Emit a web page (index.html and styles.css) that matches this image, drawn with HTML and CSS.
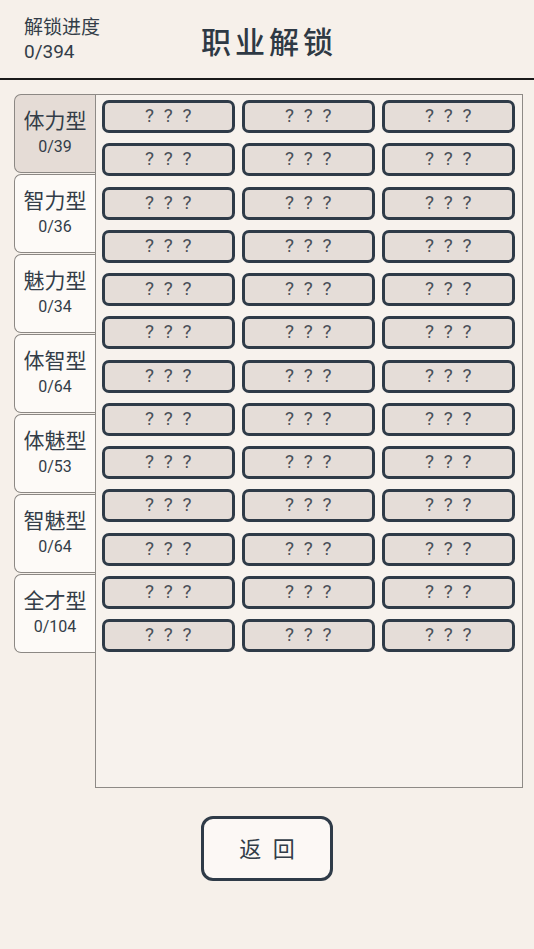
FILE: index.html
```html
<!DOCTYPE html>
<html lang="zh">
<head>
	<meta charset="UTF-8">
	<title>职业解锁</title>
	<link rel="stylesheet" href="styles.css">
</head>
<body>
	<div class="page">
		<div class="header">
			<div class="progress">
				<div>解锁进度</div>
				<div>0/394</div>
			</div>
			<div class="title">职业解锁</div>
		</div>
		<div class="main">
			<ul class="tabs">
				<li class="tab active"><span class="name">体力型</span><span class="num">0/39</span></li>
				<li class="tab"><span class="name">智力型</span><span class="num">0/36</span></li>
				<li class="tab"><span class="name">魅力型</span><span class="num">0/34</span></li>
				<li class="tab"><span class="name">体智型</span><span class="num">0/64</span></li>
				<li class="tab"><span class="name">体魅型</span><span class="num">0/53</span></li>
				<li class="tab"><span class="name">智魅型</span><span class="num">0/64</span></li>
				<li class="tab"><span class="name">全才型</span><span class="num">0/104</span></li>
			</ul>
			<div class="panel">
				<div class="grid" id="grid"></div>
			</div>
		</div>
		<div class="footer">
			<div class="back">返 回</div>
		</div>
	</div>
	<script>
		// 体力型 共39个职业，未解锁显示 ? ? ?
		var grid=document.getElementById('grid');
		for(var i=0;i<39;i++){
			var card=document.createElement('div');
			card.className='card';
			card.innerHTML='? ? ?';
			grid.appendChild(card);
		}
	</script>
</body>
</html>
```
FILE: styles.css
```css
body{
	margin:0;
	background:#f6f0ea;
	font-family:"Roboto","Noto Sans CJK SC",sans-serif;
	color:#333d48;
}
ul{
	margin:0;
	padding:0;
	list-style:none;
}
.page{
	width:534px;
	height:949px;
}
.header{
	height:78px;
	border-bottom:2px solid #1a1a1a;
	position:relative;
	display:flex;
	justify-content:center;
	align-items:center;
}
.progress{
	position:absolute;
	left:24px;
	top:16px;
	font-size:19px;
	line-height:24px;
}
.title{
	font-size:30px;
	font-weight:500;
	letter-spacing:4px;
	padding-left:4px;
	color:#2e3944;
	margin-top:2px;
}
.main{
	display:flex;
	padding:14px 11px 0 14px;
}
.tabs{
	width:81px;
	flex-shrink:0;
}
.tab{
	height:79px;
	margin-bottom:1px;
	box-sizing:border-box;
	border:1px solid #8c8884;
	border-right:none;
	border-radius:7px 0 0 7px;
	background:#fdfaf7;
	display:flex;
	flex-direction:column;
	align-items:center;
	justify-content:center;
}
.tab.active{
	background:#e5dcd6;
}
.tab .name{
	font-size:21px;
	line-height:27px;
}
.tab .num{
	font-size:16px;
	line-height:24px;
}
.panel{
	flex:1;
	height:694px;
	box-sizing:border-box;
	border:1px solid #8e8a86;
	background:#f7f2ed;
	padding:5px 7px 0 6px;
}
.grid{
	display:grid;
	grid-template-columns:repeat(3,133px);
	column-gap:7px;
	row-gap:10.25px;
}
.card{
	height:33px;
	box-sizing:border-box;
	border:3px solid #2f3b48;
	border-radius:7px;
	background:#e5ddd8;
	text-align:center;
	font-size:19px;
	line-height:25px;
	color:#4a5058;
	letter-spacing:2.5px;
	padding-left:2px;
}
.footer{
	display:flex;
	justify-content:center;
	padding-top:28px;
}
.back{
	width:132px;
	height:65px;
	box-sizing:border-box;
	border:3px solid #2f3b48;
	border-radius:12px;
	background:#fcf8f5;
	display:flex;
	align-items:center;
	justify-content:center;
	font-size:22px;
	letter-spacing:3px;
	padding-left:3px;
	padding-bottom:4px;
	color:#333d48;
}
```
